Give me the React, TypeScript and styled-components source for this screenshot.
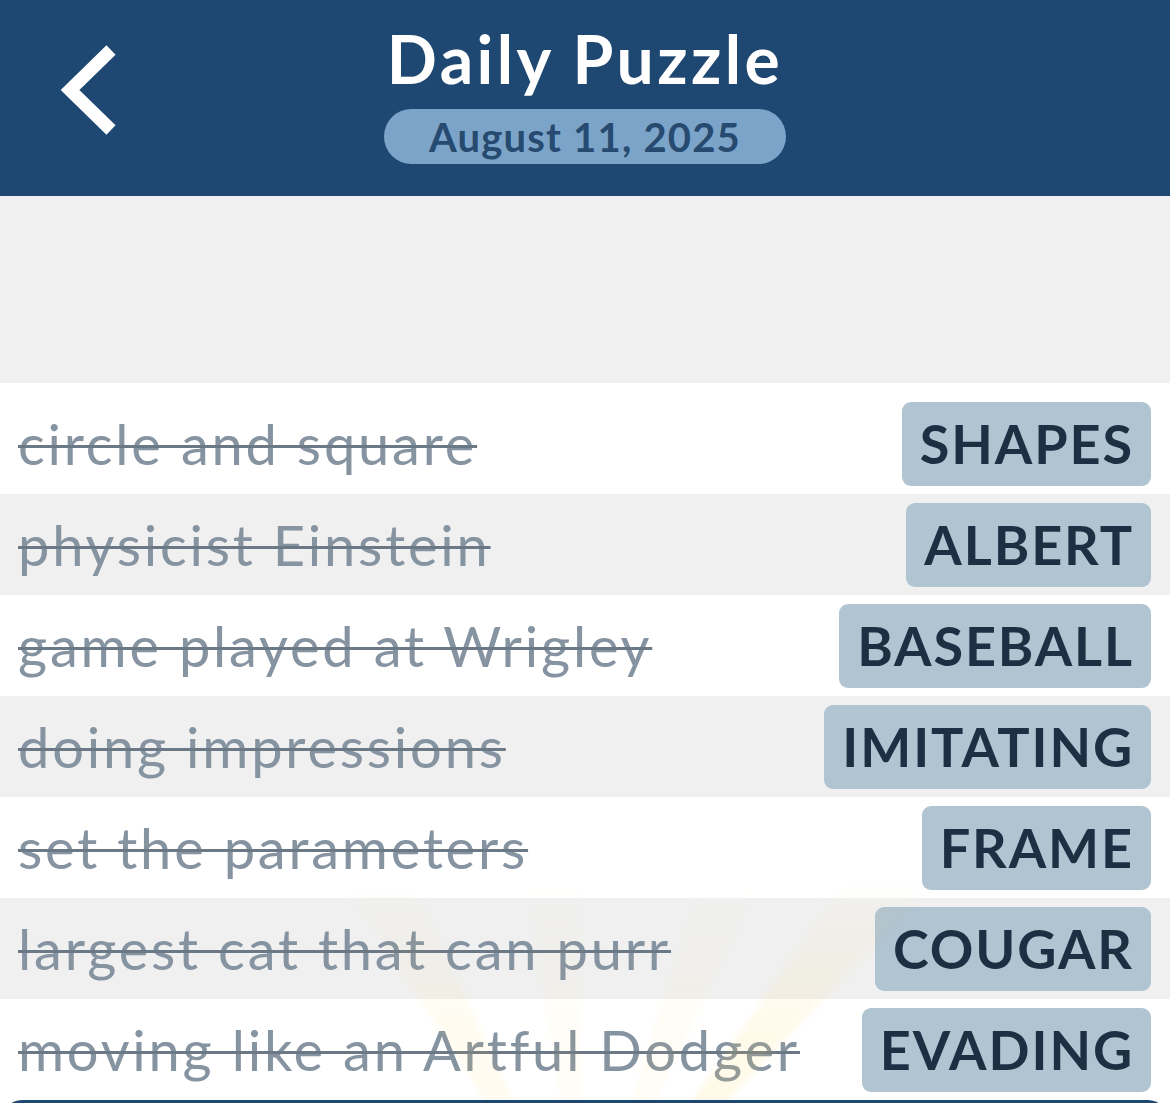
import styled, { createGlobalStyle } from 'styled-components'

const GlobalStyle = createGlobalStyle`
  html, body {
    margin: 0;
    padding: 0;
    background: #ffffff;
    overflow: hidden;
  }
  * {
    box-sizing: border-box;
  }
`

const StyledPage = styled.div`
  width: 1170px;
  height: 1103px;
  display: flex;
  flex-direction: column;
  font-family: 'Lato', 'Open Sans', sans-serif;
  overflow: hidden;
`

const StyledHeader = styled.header`
  height: 196px;
  flex-shrink: 0;
  background: #1e4871;
  display: grid;
  grid-template-columns: 1fr auto 1fr;
  align-items: start;
`

const StyledBackButton = styled.button`
  justify-self: start;
  margin: 42px 0 0 50px;
  width: 72px;
  height: 96px;
  padding: 0;
  border: none;
  background: transparent;
  display: flex;
  align-items: center;
  justify-content: center;
  cursor: pointer;
`

const StyledTitleBlock = styled.div`
  display: flex;
  flex-direction: column;
  align-items: center;
  gap: 15px;
  padding-top: 24px;
`

const StyledTitle = styled.h1`
  margin: 0;
  color: #ffffff;
  font-size: 66px;
  font-weight: 700;
  line-height: 70px;
  letter-spacing: 3.4px;
`

const StyledDatePill = styled.div`
  width: 402px;
  height: 55px;
  border-radius: 28px;
  background: #7ba4c8;
  color: #264a70;
  font-size: 40px;
  font-weight: 700;
  letter-spacing: 1.2px;
  display: flex;
  align-items: center;
  justify-content: center;
`

const StyledSpacer = styled.div`
  height: 187px;
  flex-shrink: 0;
  background: #f0f0f0;
`

const StyledList = styled.ul`
  position: relative;
  list-style: none;
  margin: 0;
  padding: 10px 0 0;
  background: #ffffff;
  flex-shrink: 0;
`

const StyledRow = styled.li<{ $shaded: boolean }>`
  height: 101px;
  display: flex;
  align-items: center;
  justify-content: space-between;
  padding: 0 19px 0 18px;
  background: ${(p) => (p.$shaded ? '#f0f0f0' : '#ffffff')};
`

const StyledClue = styled.span`
  color: #8693a1;
  font-size: 56px;
  font-weight: 400;
  letter-spacing: 2.8px;
  text-decoration: line-through;
  text-decoration-color: #6b7886;
  text-decoration-thickness: 3px;
  white-space: nowrap;
`

const StyledAnswer = styled.span`
  height: 84px;
  padding: 0 17px 0 18px;
  border-radius: 9px;
  background: #b1c4d1;
  color: #1d2f43;
  font-size: 54px;
  font-weight: 700;
  letter-spacing: 1.9px;
  display: flex;
  align-items: center;
  white-space: nowrap;
`

const StyledRays = styled.div`
  position: absolute;
  left: 0;
  right: 0;
  bottom: 0;
  height: 220px;
  pointer-events: none;
  background: conic-gradient(
    from 0deg at 50% 170%,
    transparent 0deg,
    transparent 326deg,
    rgba(255, 214, 90, 0.09) 328deg,
    rgba(255, 214, 90, 0.09) 334deg,
    transparent 336deg,
    transparent 350deg,
    rgba(255, 214, 90, 0.05) 352deg,
    rgba(255, 214, 90, 0.05) 358deg,
    transparent 360deg
  ),
  conic-gradient(
    from 0deg at 50% 170%,
    transparent 0deg,
    transparent 16deg,
    rgba(255, 214, 90, 0.06) 18deg,
    rgba(255, 214, 90, 0.06) 24deg,
    transparent 26deg,
    transparent 34deg,
    rgba(255, 214, 90, 0.13) 36deg,
    rgba(255, 214, 90, 0.13) 42deg,
    transparent 44deg
  );
  mask-image: linear-gradient(to top, #000 30%, transparent 100%);
`

const StyledFooter = styled.div`
  height: 40px;
  flex-shrink: 0;
  margin: 0 2px;
  background: #1e4871;
  border-radius: 20px 20px 0 0;
`

const clues = [
  { clue: 'circle and square', answer: 'SHAPES' },
  { clue: 'physicist Einstein', answer: 'ALBERT' },
  { clue: 'game played at Wrigley', answer: 'BASEBALL' },
  { clue: 'doing impressions', answer: 'IMITATING' },
  { clue: 'set the parameters', answer: 'FRAME' },
  { clue: 'largest cat that can purr', answer: 'COUGAR' },
  { clue: 'moving like an Artful Dodger', answer: 'EVADING' },
]

function App() {
  return (
    <>
      <GlobalStyle />
      <StyledPage>
        <StyledHeader>
          <StyledBackButton aria-label="Back">
            <svg width="72" height="96" viewBox="0 0 72 96">
              <polyline points="61,8 20,48 61,88" fill="none" stroke="#ffffff" strokeWidth="13" strokeLinejoin="miter" strokeMiterlimit={4} />
            </svg>
          </StyledBackButton>
          <StyledTitleBlock>
            <StyledTitle>Daily Puzzle</StyledTitle>
            <StyledDatePill>August 11, 2025</StyledDatePill>
          </StyledTitleBlock>
          <div />
        </StyledHeader>
        <StyledSpacer />
        <StyledList>
          {clues.map((c, i) => (
            <StyledRow key={c.answer} $shaded={i % 2 === 1}>
              <StyledClue>{c.clue}</StyledClue>
              <StyledAnswer>{c.answer}</StyledAnswer>
            </StyledRow>
          ))}
          <StyledRays />
        </StyledList>
        <StyledFooter />
      </StyledPage>
    </>
  )
}

export default App
